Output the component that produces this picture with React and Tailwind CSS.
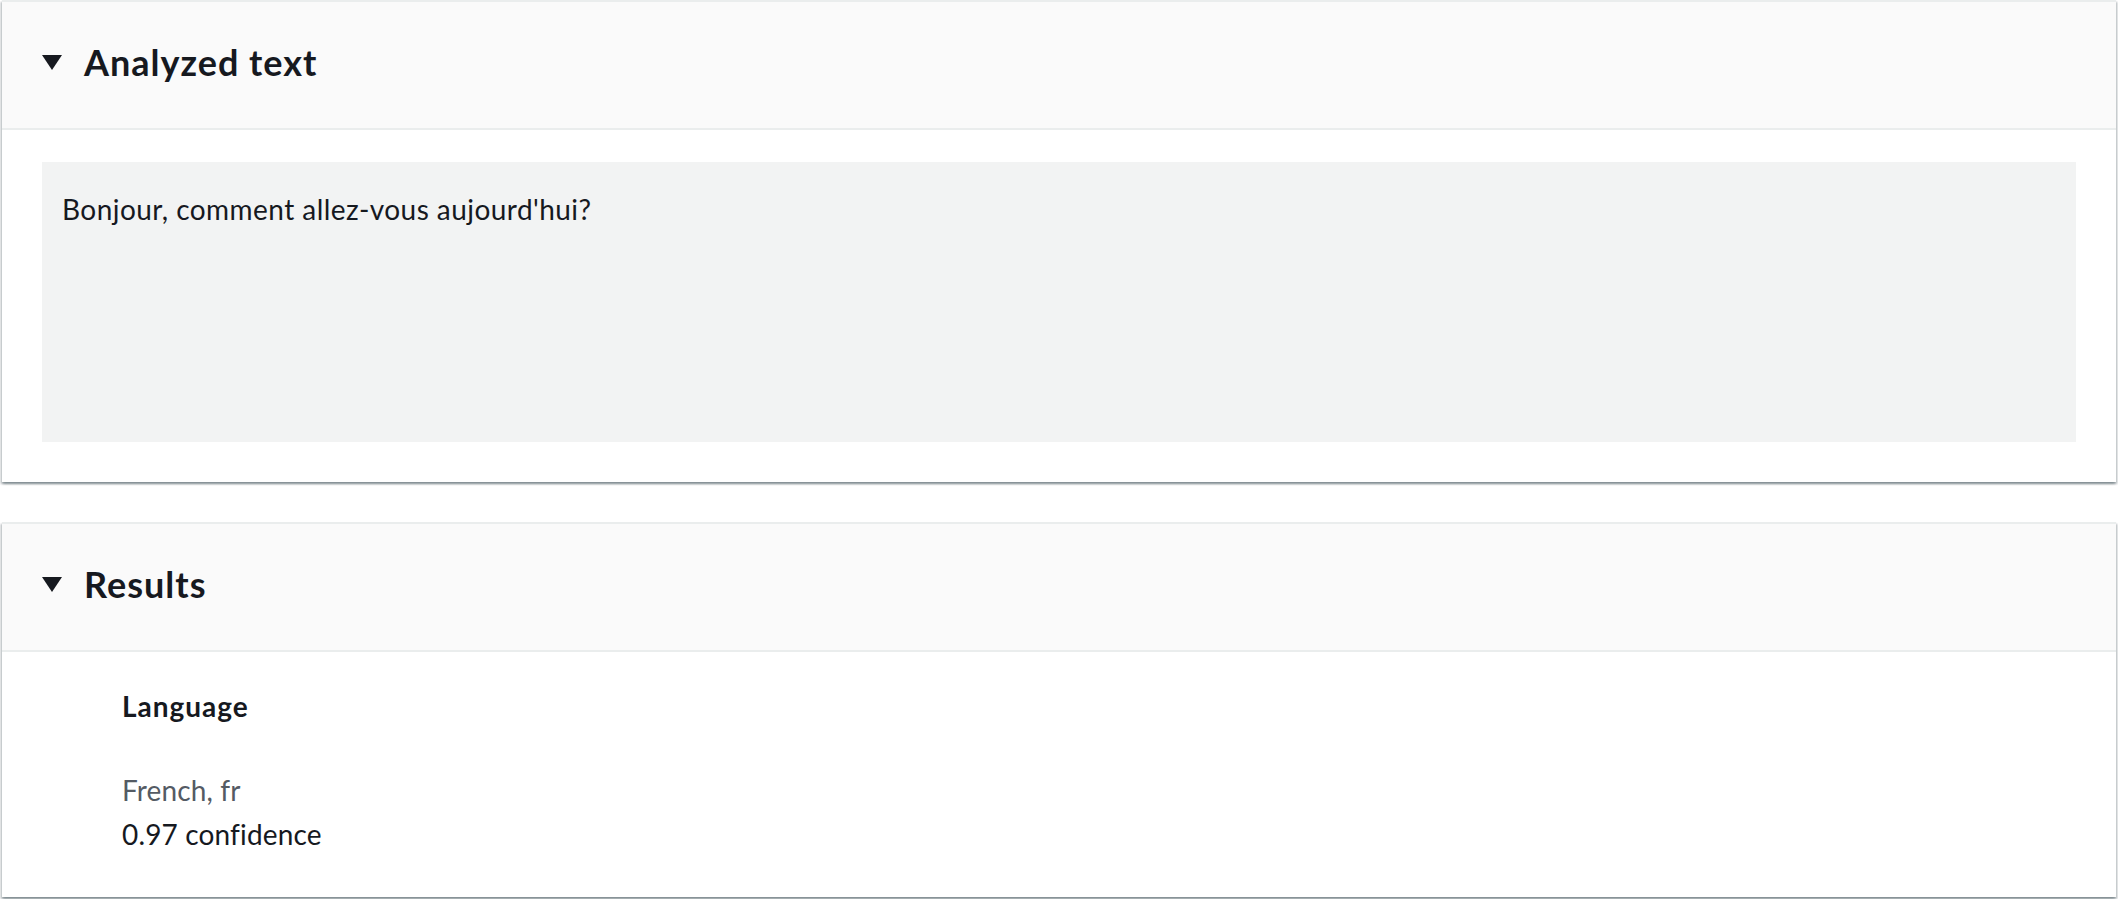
import React from "react";

const FONT = { fontFamily: "Lato, 'Open Sans', 'Liberation Sans', sans-serif" };

function Caret() {
  return (
    <svg width="20" height="15" viewBox="0 0 20 15" className="shrink-0">
      <polygon points="0,0 20,0 10,15" fill="#16191f" />
    </svg>
  );
}

// expandable container, header + body
function Container({ title, children, className = "" }) {
  return (
    <div
      className={`bg-white border-t-2 border-[#eaeded] shadow-[0_2px_2px_0_rgba(0,28,36,0.3),2px_2px_2px_0_rgba(0,28,36,0.15),-2px_2px_2px_0_rgba(0,28,36,0.15)] ${className}`}
    >
      <div className="h-[128px] flex items-center gap-[22px] pl-[40px] pb-[6px] bg-[#fafafa] border-b-2 border-[#eaeded]">
        <Caret />
        <h2 className="text-[36px] leading-[44px] font-bold tracking-[1px] text-[#16191f]">{title}</h2>
      </div>
      {children}
    </div>
  );
}

export default function App() {
  return (
    <div className="min-h-screen bg-white px-[2px] text-[#16191f]" style={FONT}>
      <Container title="Analyzed text">
        <div className="px-[40px] pt-[32px] pb-[40px]">
          <div className="h-[280px] bg-[#f2f3f3] px-[20px] pt-[25px] text-[28px] leading-[44px] tracking-[0.45px]">
            Bonjour, comment allez-vous aujourd'hui?
          </div>
        </div>
      </Container>

      <Container title="Results" className="mt-[40px]">
        <div className="pl-[120px] pt-[32px] pb-[41px] text-[28px] leading-[44px] tracking-[0.15px]">
          <div className="font-bold tracking-[1px]">Language</div>
          <div className="mt-[40px] text-[#545b64]">French, fr</div>
          <div>0.97 confidence</div>
        </div>
      </Container>
    </div>
  );
}
